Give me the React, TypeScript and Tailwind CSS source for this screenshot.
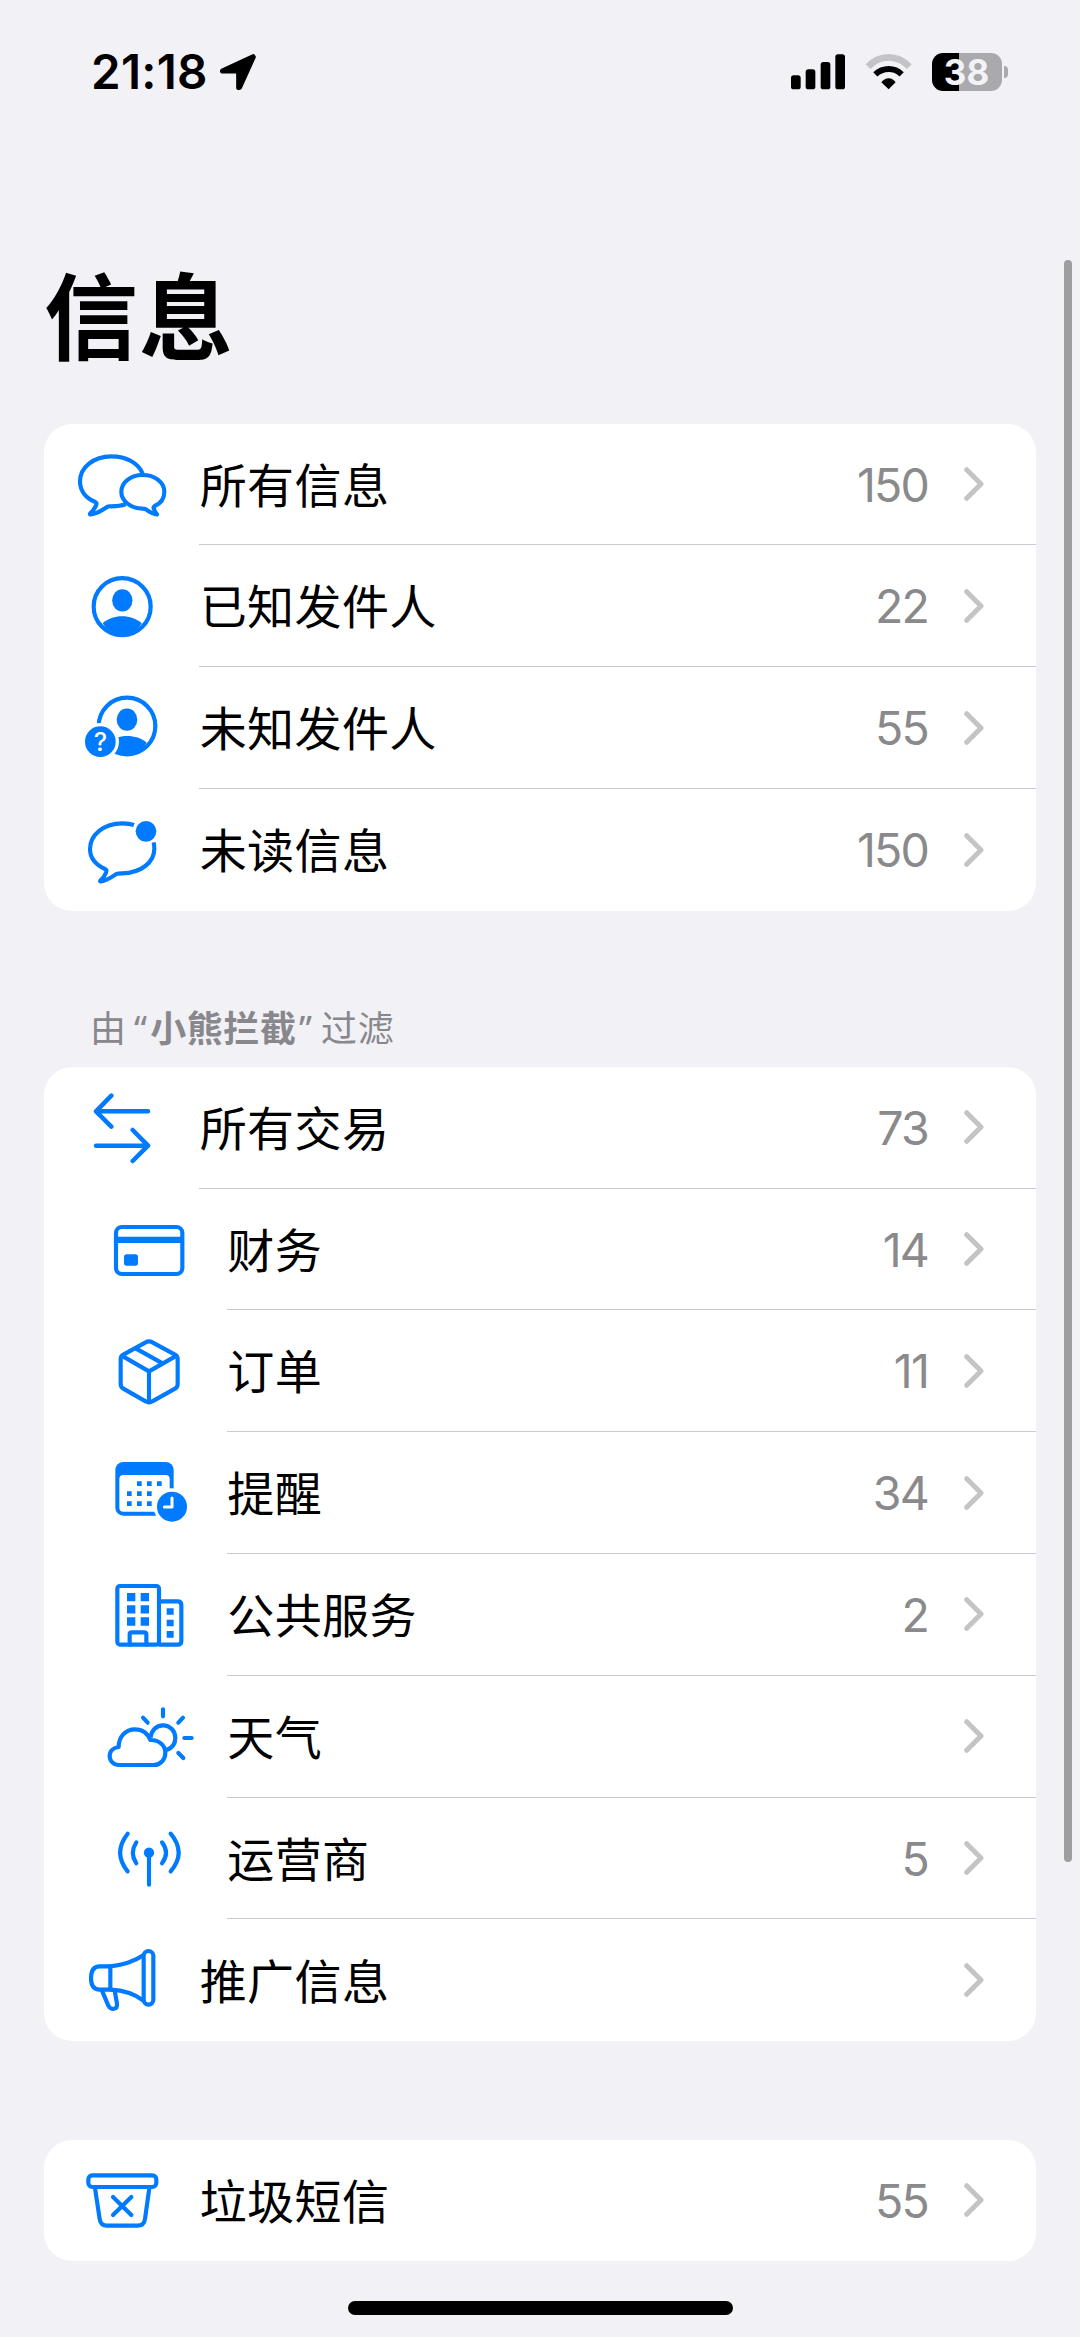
import React from "react";

interface IFilterRow {
  label: string;
  count?: number;
  icon: React.ReactNode;
  nested?: boolean;
}

interface IIconProps {
  viewBox: string;
  children: React.ReactNode;
}

const Icon = ({ viewBox, children }: IIconProps) => (
  <svg
    viewBox={viewBox}
    className="w-[100px] h-[72px] shrink-0"
    fill="none"
    stroke="#007aff"
    strokeWidth={12.5}
    strokeLinecap="round"
    strokeLinejoin="round"
  >
    {children}
  </svg>
);

const BubblesIcon = () => (
  <Icon viewBox="95 116 300 216">
    <path
      strokeLinecap="butt"
      d="M307 190C294 158 258 138 213 138C160 138 119 171 119 213C119 242 137 264 165 275Q171 278 167 286C163 295 156 303 150 309C147 313 150 313 154 312C172 308 186 300 200 290Q204 287 213 288C228 288 242 287 256 282"
    />
    <path d="M243 244C243 216 271 194 307 194C344 194 372 216 372 244C372 263 361 279 343 287Q338 290 341 296Q343 304 350 312C338 312 326 304 317 297Q313 295 307 295C271 294 243 272 243 244Z" />
  </Icon>
);

const PersonIcon = () => (
  <Icon viewBox="95 481 300 216">
    <circle cx="245.500" cy="591" r="85.500" />
    <ellipse cx="246" cy="572" rx="30.5" ry="33.5" fill="#007aff" stroke="none" />
    <path
      d="M187 641C203 627 223 620 245 620C268 620 288 627 304 641A66 66 0 0 1 187 641Z"
      fill="#007aff"
      stroke="none"
    />
  </Icon>
);

const UnknownPersonIcon = () => (
  <Icon viewBox="95 97 300 216">
    <circle cx="260" cy="199" r="85" />
    <ellipse cx="260" cy="180" rx="31" ry="33.5" fill="#007aff" stroke="none" />
    <path
      d="M202 249C218 235 238 229 260 229C283 229 303 235 319 249A66 66 0 0 1 202 249Z"
      fill="#007aff"
      stroke="none"
    />
    <circle cx="180" cy="246" r="56" fill="#fff" stroke="none" />
    <circle cx="180" cy="246" r="46" fill="#007aff" stroke="none" />
    <text
      x="180"
      y="273"
      fill="#fff"
      stroke="none"
      textAnchor="middle"
      fontSize="76"
      className="font-['Inter'] font-medium"
    >
      ?
    </text>
  </Icon>
);

const UnreadIcon = () => (
  <Icon viewBox="95 462 300 216">
    <path
      strokeLinecap="butt"
      d="M281 495C270 491 258 490 246 490C190 490 149 525 149 567C149 595 166 614 194 627Q201 630 197 638C193 648 187 656 180 662Q178 665 182 664C200 662 216 650 228 642Q232 640 245 640C302 639 342 607 342 566Q342 556 340 547"
    />
    <circle cx="317" cy="514" r="31" fill="#007aff" stroke="none" />
  </Icon>
);

const ArrowsIcon = () => (
  <Icon viewBox="95 336 300 216">
    <path
      strokeWidth={13.5}
      d="M168 394H323M213 347L167 394L213 440M167 497H323M277 450L323 497L277 543"
    />
  </Icon>
);

const CardIcon = () => (
  <Icon viewBox="178 131 300 216">
    <rect x="229" y="170" width="199" height="141" rx="18" />
    <path d="M229 208.500H428" strokeWidth={19} strokeLinecap="butt" />
    <rect x="253" y="252" width="42" height="34" rx="8" fill="#007aff" stroke="none" />
  </Icon>
);

const BoxIcon = () => (
  <Icon viewBox="178 496 300 216">
    <path d="M318 518Q328 512 338 518L406 555Q414 559 414 568V643Q414 652 406 657L338 695Q328 701 318 695L251 657Q243 652 243 643V568Q243 559 251 555Z" />
    <path strokeLinecap="butt" d="M246 558L328 605L411 558M328 605V698M288 536L370 582" />
  </Icon>
);

const CalendarIcon = () => (
  <Icon viewBox="178 82 300 216">
    <rect x="227" y="97" width="175" height="161" rx="24" fill="#007aff" stroke="none" />
    <rect x="239" y="136" width="151" height="110" rx="12" fill="#fff" stroke="none" />
    <path
      strokeWidth={14}
      strokeLinecap="butt"
      d="M292 162H306M322 162H336M352 162H366M262 192H276M292 192H306M322 192H336M262 222H276M292 222H306M322 222H336"
    />
    <circle cx="397" cy="231" r="55" fill="#fff" stroke="none" />
    <circle cx="397" cy="231" r="45" fill="#007aff" stroke="none" />
    <path stroke="#fff" strokeWidth={9} d="M397 205V232H374" />
  </Icon>
);

const BuildingIcon = () => (
  <Icon viewBox="178 447 300 216">
    <rect x="233" y="468" width="125" height="176" rx="8" />
    <path d="M360 514H414Q425 514 425 525V633Q425 644 414 644H360" />
    <path d="M270 644V613Q270 607 277 607H313Q320 607 320 613V644" />
    <path
      strokeWidth={25}
      strokeLinecap="butt"
      d="M262 501.500H287M303 501.500H328M262 538H287M303 538H328M262 574.500H287M303 574.500H328"
    />
    <path
      strokeWidth={20}
      strokeLinecap="butt"
      d="M381 544.500H402M381 579H402M381 613H402"
    />
  </Icon>
);

const WeatherIcon = () => (
  <Icon viewBox="178 93 300 216">
    <path d="M238 285C222 285 210 273 210 258C210 243 221 233 237 231C237 201 257 178 286 178C308 178 324 190 332 210C360 210 377 227 377 248C377 269 362 285 342 285Z" />
    <path
      strokeLinecap="butt"
      d="M333 203C335 181 350 166 370 166C391 166 407 183 407 204C407 222 397 234 381 240"
    />
    <path d="M370 118V139M310 143L324 158M430 143L416 158M434 204H456M416 249L431 264" />
  </Icon>
);

const AntennaIcon = () => (
  <Icon viewBox="178 458 300 216">
    <circle cx="328" cy="547" r="15.500" fill="#007aff" stroke="none" />
    <path d="M328 547V643M290 516Q269 547 290 579M367 516Q391 547 367 579M264 490Q219 547 264 603M393 490Q441 547 393 603" />
  </Icon>
);

const MegaphoneIcon = () => (
  <Icon viewBox="95 823 300 216">
    <path d="M210 890H178C160 890 152 902 152 926C152 950 162 960 178 960H210M210 890V960" />
    <path d="M210 890C250 886 285 873 309 857M210 960C250 962 285 974 309 993" />
    <rect x="310" y="844" width="29" height="161" rx="14.500" />
    <path d="M185 963L204 1008Q209 1018 219 1018Q232 1016 230 1002L223 963" />
  </Icon>
);

const BinIcon = () => (
  <Icon viewBox="95 133 300 216">
    <rect x="144" y="167" width="204" height="35" rx="12" />
    <path d="M164 205L178 298Q181 318 200 318H292Q311 318 314 298L327 205" />
    <path d="M218 232L273 286M273 232L218 286" />
  </Icon>
);

const mainRows: IFilterRow[] = [
  { label: "所有信息", count: 150, icon: <BubblesIcon /> },
  { label: "已知发件人", count: 22, icon: <PersonIcon /> },
  { label: "未知发件人", count: 55, icon: <UnknownPersonIcon /> },
  { label: "未读信息", count: 150, icon: <UnreadIcon /> },
];

const filteredRows: IFilterRow[] = [
  { label: "所有交易", count: 73, icon: <ArrowsIcon /> },
  { label: "财务", count: 14, icon: <CardIcon />, nested: true },
  { label: "订单", count: 11, icon: <BoxIcon />, nested: true },
  { label: "提醒", count: 34, icon: <CalendarIcon />, nested: true },
  { label: "公共服务", count: 2, icon: <BuildingIcon />, nested: true },
  { label: "天气", icon: <WeatherIcon />, nested: true },
  { label: "运营商", count: 5, icon: <AntennaIcon />, nested: true },
  { label: "推广信息", icon: <MegaphoneIcon /> },
];

const junkRows: IFilterRow[] = [
  { label: "垃圾短信", count: 55, icon: <BinIcon /> },
];

const FilterList = ({ rows }: { rows: IFilterRow[] }) => (
  <ul className="mx-[44px] rounded-[28px] bg-white overflow-hidden">
    {rows.map((row, index) => (
      <li
        key={row.label}
        className={`flex h-[121.8px] ${row.nested ? "pl-[55.300px]" : "pl-[27.700px]"}`}
      >
        <div className="flex items-center">{row.icon}</div>
        <div
          className={`ml-[27.500px] flex flex-1 items-center pr-[52px] ${
            index < rows.length - 1 ? "border-b border-[#cbcbcd]" : ""
          }`}
        >
          <span className="flex-1 pt-[3px] pl-[0.500px] text-[47px] leading-[60px] tracking-[0.4px] text-black">
            {row.label}
          </span>
          {row.count !== undefined && (
            <span className="pt-px text-[46.500px] leading-[60px] tracking-[-1.8px] text-[#8a8a8d]">
              {row.count}
            </span>
          )}
          <svg
            viewBox="0 0 20 34"
            className="ml-[36px] h-[34px] w-[20px]"
            fill="none"
            stroke="#c4c4c6"
            strokeWidth={5}
            strokeLinecap="round"
            strokeLinejoin="round"
          >
            <path d="M2.700 2.700L17 17L2.700 31.300" />
          </svg>
        </div>
      </li>
    ))}
  </ul>
);

const StatusBar = () => (
  <div className="flex h-[144px] items-center pl-[91px] pr-[72px]">
    <span className="text-[47.500px] font-semibold leading-[60px] tracking-[0.300px] text-black">
      21:18
    </span>
    <svg viewBox="540 100 114 114" className="ml-[11.500px] h-[38px] w-[38px]">
      <path
        d="M643 109L549 152Q547 157 551 156H597V205Q601 207 604 203L645 112Z"
        stroke="#000"
        strokeWidth={11}
        strokeLinejoin="round"
      />
    </svg>
    <div className="flex flex-1 items-center justify-end">
      <svg viewBox="150 101 162 107" className="h-[35.700px] w-[54px]">
        <rect x="150" y="165" width="29" height="42" rx="8" />
        <rect x="194" y="147" width="29" height="60" rx="8" />
        <rect x="239" y="125" width="29" height="82" rx="8" />
        <rect x="283" y="102" width="29" height="105" rx="8" />
      </svg>
      <svg viewBox="372 101 142 107" className="ml-[20px] h-[35.700px] w-[47.300px]" fill="none">
        <path d="M381 139Q408 111 443 111T505 139" stroke="#c4c4c8" strokeWidth={20} />
        <path d="M403 162Q420 146 443 146T482 162" stroke="#000" strokeWidth={18} />
        <path d="M421 186Q431 174 443 174T464 186L443 207Z" fill="#000" />
      </svg>
      <div className="ml-[19.500px] flex h-[38.700px] w-[70px] items-center justify-center rounded-[11px] bg-[linear-gradient(to_right,#000_39%,#a9a9ae_39%)] text-[35px] font-bold leading-none text-[#f2f2f7]">
        38
      </div>
      <div className="ml-[2px] h-[12px] w-[4.500px] rounded-r-full bg-[#a9a9ae]" />
    </div>
  </div>
);

const App = () => {
  return (
    <main
      lang="zh-CN"
      className="relative flex h-[2337px] w-[1080px] flex-col overflow-hidden bg-[#f1f1f6] font-['Inter','Noto_Sans_CJK_SC',sans-serif]"
    >
      <StatusBar />

      <h1 className="mt-[107px] ml-[44px] h-[172.700px] text-[94px] font-bold leading-[136px] tracking-[1px] text-black">
        信息
      </h1>

      <FilterList rows={mainRows} />

      <h2 className="mt-[91px] ml-[90px] flex h-[65px] items-start text-[36px] leading-[54px] tracking-[0.600px] text-[#87878c]">
        <span>由</span>
        <span className="ml-[7.500px] font-['Noto_Sans']">“</span>
        <span className="ml-[2.500px] font-bold">小熊拦截</span>
        <span className="ml-[2.500px] font-['Noto_Sans']">”</span>
        <span className="ml-[8.500px]">过滤</span>
      </h2>

      <FilterList rows={filteredRows} />

      <div className="h-[98.300px] shrink-0" />
      <FilterList rows={junkRows} />

      <div className="mx-auto mt-auto mb-[22px] h-[14px] w-[385px] shrink-0 rounded-full bg-black" />

      {/* scroll indicator */}
      <div className="absolute top-[260px] right-[8px] h-[1602px] w-[8.500px] rounded-full bg-[#9e9ea1]" />
    </main>
  );
};

export default App;
